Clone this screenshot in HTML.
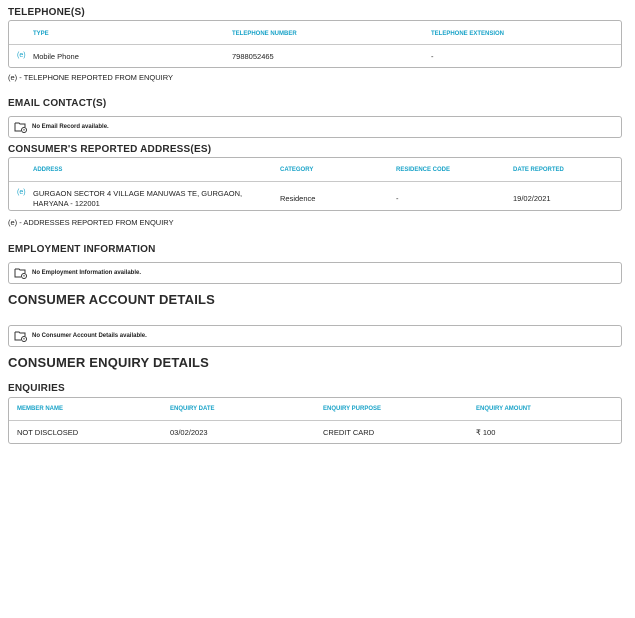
<!DOCTYPE html>
<html><head><meta charset="utf-8"><style>
body{margin:0;width:635px;height:618px;background:#fff;font-family:"Liberation Sans",sans-serif;color:#222;position:relative;overflow:hidden}
.a{position:absolute;white-space:nowrap}
.h{font-weight:bold;font-size:10px;color:#2a2a2a;letter-spacing:.2px}
.H{font-weight:bold;font-size:13px;color:#2a2a2a;letter-spacing:.2px}
.box{position:absolute;left:8px;width:612px;border:1px solid #b5b5b5;border-radius:3px}
.sep{position:absolute;left:9px;width:612px;height:1px;background:#c8c8c8}
.th{font-size:6px;font-weight:bold;color:#1aa3c8}
.td{font-size:7.5px;color:#222}
.e{font-size:7px;color:#1aa3c8}
.fn{font-size:7.5px;color:#222}
.nr{font-size:6px;font-weight:bold;color:#222}
</style></head><body>
<div class="a h" style="left:8px;top:7px">TELEPHONE(S)</div>
<div class="box" style="top:20px;height:46px"></div>
<div class="sep" style="top:44px"></div>
<div class="a th" style="left:33px;top:31px">TYPE</div>
<div class="a th" style="left:232px;top:31px">TELEPHONE NUMBER</div>
<div class="a th" style="left:431px;top:31px">TELEPHONE EXTENSION</div>
<div class="a e" style="left:17px;top:52px">(e)</div>
<div class="a td" style="left:33px;top:52px">Mobile Phone</div>
<div class="a td" style="left:232px;top:52px">7988052465</div>
<div class="a td" style="left:431px;top:52px">-</div>
<div class="a fn" style="left:8px;top:73px">(e) - TELEPHONE REPORTED FROM ENQUIRY</div>

<div class="a h" style="left:8px;top:98px">EMAIL CONTACT(S)</div>
<div class="box" style="top:116px;height:20px"></div>
<svg class="a" style="left:14px;top:121px" width="14" height="12" viewBox="0 0 14 12" fill="none" stroke="#333" stroke-width="1"><path d="M1 2h4l1 1h5v3M1 2v8h6"/><circle cx="10" cy="9" r="2.5"/><path d="M10 8v1.5"/></svg>
<div class="a nr" style="left:32px;top:124px">No Email Record available.</div>

<div class="a h" style="left:8px;top:144px">CONSUMER'S REPORTED ADDRESS(ES)</div>
<div class="box" style="top:157px;height:52px"></div>
<div class="sep" style="top:181px"></div>
<div class="a th" style="left:33px;top:167px">ADDRESS</div>
<div class="a th" style="left:280px;top:167px">CATEGORY</div>
<div class="a th" style="left:396px;top:167px">RESIDENCE CODE</div>
<div class="a th" style="left:513px;top:167px">DATE REPORTED</div>
<div class="a e" style="left:17px;top:189px">(e)</div>
<div class="a td" style="left:33px;top:189px;line-height:10px">GURGAON SECTOR 4 VILLAGE MANUWAS TE, GURGAON,<br>HARYANA - 122001</div>
<div class="a td" style="left:280px;top:194px">Residence</div>
<div class="a td" style="left:396px;top:194px">-</div>
<div class="a td" style="left:513px;top:194px">19/02/2021</div>
<div class="a fn" style="left:8px;top:218px">(e) - ADDRESSES REPORTED FROM ENQUIRY</div>

<div class="a h" style="left:8px;top:244px">EMPLOYMENT INFORMATION</div>
<div class="box" style="top:262px;height:20px"></div>
<svg class="a" style="left:14px;top:267px" width="14" height="12" viewBox="0 0 14 12" fill="none" stroke="#333" stroke-width="1"><path d="M1 2h4l1 1h5v3M1 2v8h6"/><circle cx="10" cy="9" r="2.5"/><path d="M10 8v1.5"/></svg>
<div class="a nr" style="left:32px;top:270px">No Employment Information available.</div>

<div class="a H" style="left:8px;top:292px">CONSUMER ACCOUNT DETAILS</div>
<div class="box" style="top:325px;height:20px"></div>
<svg class="a" style="left:14px;top:330px" width="14" height="12" viewBox="0 0 14 12" fill="none" stroke="#333" stroke-width="1"><path d="M1 2h4l1 1h5v3M1 2v8h6"/><circle cx="10" cy="9" r="2.5"/><path d="M10 8v1.5"/></svg>
<div class="a nr" style="left:32px;top:333px">No Consumer Account Details available.</div>

<div class="a H" style="left:8px;top:355px">CONSUMER ENQUIRY DETAILS</div>
<div class="a h" style="left:8px;top:383px">ENQUIRIES</div>
<div class="box" style="top:397px;height:45px"></div>
<div class="sep" style="top:420px"></div>
<div class="a th" style="left:17px;top:406px">MEMBER NAME</div>
<div class="a th" style="left:170px;top:406px">ENQUIRY DATE</div>
<div class="a th" style="left:323px;top:406px">ENQUIRY PURPOSE</div>
<div class="a th" style="left:476px;top:406px">ENQUIRY AMOUNT</div>
<div class="a td" style="left:17px;top:428px">NOT DISCLOSED</div>
<div class="a td" style="left:170px;top:428px">03/02/2023</div>
<div class="a td" style="left:323px;top:428px">CREDIT CARD</div>
<div class="a td" style="left:476px;top:428px">₹ 100</div>
</body></html>
